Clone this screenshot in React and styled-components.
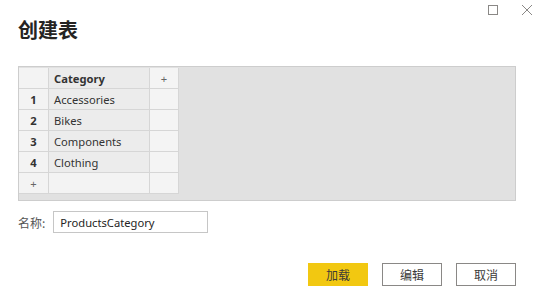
import React from 'react'
import styled, { createGlobalStyle } from 'styled-components'

const GlobalStyle = createGlobalStyle`
  body {
    margin: 0;
    background: #ffffff;
    font-family: "Segoe UI", "Noto Sans", "Noto Sans CJK SC", sans-serif;
  }
`

const Dialog = styled.div`
  width: 543px;
  height: 297px;
  box-sizing: border-box;
  padding: 0 27px 0 18px;
  display: flex;
  flex-direction: column;
`

const TopBar = styled.div`
  height: 20px;
  display: flex;
  justify-content: flex-end;
  align-items: flex-start;
  gap: 22px;
  margin-right: -17px;
  padding-top: 4px;
  box-sizing: border-box;
`

const Title = styled.h1`
  margin: 0;
  font-family: "Noto Sans CJK SC", sans-serif;
  font-size: 20px;
  line-height: 20px;
  font-weight: 700;
  color: #252423;
`

const Panel = styled.div`
  margin-top: 26px;
  height: 135px;
  box-sizing: border-box;
  border: 1px solid #cdcdcd;
  background: #e1e1e1;
  padding-top: 1px;
`

const Grid = styled.div`
  display: grid;
  grid-template-columns: 30px 101px 29px;
  grid-auto-rows: 21px;
  width: 160px;
`

const Cell = styled.div`
  box-sizing: border-box;
  border-right: 1px solid #d6d6d6;
  border-bottom: 1px solid #d6d6d6;
  background: ${p => p.$bg};
  display: flex;
  align-items: center;
  justify-content: ${p => (p.$center ? 'center' : 'flex-start')};
  padding-left: ${p => (p.$center ? '0' : '5px')};
  font-size: 11.2px;
  font-weight: ${p => (p.$bold ? 700 : 400)};
  color: ${p => (p.$muted ? '#666' : '#333')};
`

const NameRow = styled.div`
  margin-top: 10px;
  display: flex;
  align-items: center;
  gap: 8px;
`

const Label = styled.span`
  font-family: "Noto Sans CJK SC", sans-serif;
  font-size: 12px;
  color: #555;
`

const NameInput = styled.div`
  width: 155px;
  height: 22px;
  box-sizing: border-box;
  border: 1px solid #c6c6c6;
  display: flex;
  align-items: center;
  padding-left: 6px;
  font-size: 11.2px;
  color: #252423;
`

const ButtonRow = styled.div`
  margin-top: 30px;
  display: flex;
  justify-content: flex-end;
  gap: 14px;
`

const Button = styled.button`
  width: 60px;
  height: 23px;
  box-sizing: border-box;
  border: 1px solid ${p => (p.$primary ? '#f2c811' : '#8a8886')};
  background: ${p => (p.$primary ? '#f2c811' : '#ffffff')};
  font-family: "Noto Sans CJK SC", sans-serif;
  font-size: 12px;
  color: #3b3a39;
  padding: 0;
`

const rows = ['Accessories', 'Bikes', 'Components', 'Clothing']

export default function App() {
  return (
    <>
      <GlobalStyle />
      <Dialog>
        <TopBar>
          <svg width="12" height="12" viewBox="0 0 12 12">
            <rect x="1.5" y="1.5" width="9" height="9" fill="none" stroke="#8a8886" strokeWidth="1" />
          </svg>
          <svg width="12" height="12" viewBox="0 0 12 12">
            <path d="M1 1 L11 11 M11 1 L1 11" stroke="#8a8886" strokeWidth="1" />
          </svg>
        </TopBar>
        <Title>创建表</Title>
        <Panel>
          <Grid>
            <Cell $bg="#f3f3f3" />
            <Cell $bg="#ebebeb" $bold>Category</Cell>
            <Cell $bg="#f4f4f4" $center $muted>+</Cell>
            {rows.map((name, i) => (
              <React.Fragment key={name}>
                <Cell $bg="#f3f3f3" $center $bold>{i + 1}</Cell>
                <Cell $bg="#ececec">{name}</Cell>
                <Cell $bg="#f4f4f4" />
              </React.Fragment>
            ))}
            <Cell $bg="#f3f3f3" $center $muted>+</Cell>
            <Cell $bg="#f3f3f3" />
            <Cell $bg="#f4f4f4" />
          </Grid>
        </Panel>
        <NameRow>
          <Label>名称:</Label>
          <NameInput>ProductsCategory</NameInput>
        </NameRow>
        <ButtonRow>
          <Button $primary>加载</Button>
          <Button>编辑</Button>
          <Button>取消</Button>
        </ButtonRow>
      </Dialog>
    </>
  )
}
